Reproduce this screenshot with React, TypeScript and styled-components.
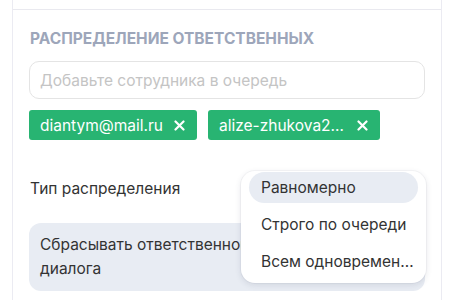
import React from "react";
import styled, { createGlobalStyle } from "styled-components";

const Global = createGlobalStyle`
  html, body { margin: 0; padding: 0; background: #ffffff; }
  body { font-family: Inter, "Noto Sans", sans-serif; color: #333; }
  * { box-sizing: border-box; }
`;

const Panel = styled.div`
  margin-left: 12px;
  width: 430px;
  border-left: 1px solid #ebebf2;
  border-right: 1px solid #ebebf2;
  min-height: 300px;
`;

const PrevSection = styled.div`
  height: 9px;
`;

const Section = styled.section`
  border-top: 1px solid #e9e9ef;
  padding: 18px 16px 0 16px;
  display: flex;
  flex-direction: column;
`;

const Title = styled.h3`
  margin: 0 0 0 1px;
  font-size: 15.5px;
  line-height: 22px;
  font-weight: 700;
  color: #9da6ba;
  text-transform: uppercase;
  letter-spacing: 0;
`;

const Input = styled.input`
  margin-top: 11px;
  height: 38px;
  width: 396px;
  border: 1px solid #e4e4e4;
  border-radius: 10px;
  padding: 0 10px;
  font-family: inherit;
  font-size: 15.5px;
  color: #333;
  outline: none;
  &::placeholder { color: #c4c4c4; }
`;

const Chips = styled.div`
  margin-top: 11px;
  display: flex;
  gap: 11px;
`;

const Chip = styled.div`
  height: 30px;
  display: flex;
  align-items: center;
  gap: 11px;
  padding: 0 12px 0 11px;
  background: #28b472;
  border-radius: 3px;
  color: #fff;
  font-size: 15.5px;
`;

const ChipText = styled.span`
  max-width: 127px;
  white-space: nowrap;
  overflow: hidden;
  text-overflow: ellipsis;
`;

const Close = styled.svg`
  width: 11px;
  height: 11px;
  flex: none;
`;

const Row = styled.div`
  margin-top: 33px;
  height: 30px;
  display: flex;
  align-items: center;
  justify-content: space-between;
  position: relative;
`;

const Label = styled.span`
  font-size: 15.5px;
  margin-left: 1px;
  color: #333;
`;

const SelectWrap = styled.div`
  position: relative;
  width: 185px;
  height: 30px;
  margin-right: -1px;
`;

const Menu = styled.ul`
  position: absolute;
  left: 0;
  top: -2px;
  z-index: 2;
  width: 185px;
  margin: 0;
  padding: 1px 8px 6px;
  list-style: none;
  background: #fff;
  border-radius: 14px;
  box-shadow: 0 2px 6px rgba(40, 50, 80, 0.12), 0 0 0 1px rgba(40, 50, 80, 0.04);
  display: flex;
  flex-direction: column;
  gap: 6px;
`;

const Item = styled.li<{ $active?: boolean }>`
  height: 31px;
  display: flex;
  align-items: center;
  padding: 0 3px 0 12px;
  border-radius: 16px;
  background: ${(p) => (p.$active ? "#e8ecf3" : "transparent")};
  font-size: 15.5px;
  color: #333;
  white-space: nowrap;
  overflow: hidden;
  span { overflow: hidden; text-overflow: ellipsis; }
`;

const Toggle = styled.div`
  margin-top: 20px;
  width: 396px;
  height: 68px;
  background: #e8ecf3;
  border-radius: 12px;
  padding: 10px 11px;
  font-size: 15.5px;
  line-height: 24px;
  color: #333;
`;

const X = () => (
  <Close viewBox="0 0 11 11">
    <path d="M1.5 1.5 L9.5 9.5 M9.5 1.5 L1.5 9.5" stroke="#fff" strokeWidth="2.2" strokeLinecap="round" />
  </Close>
);

export default function App() {
  return (
    <>
      <Global />
      <Panel>
        <PrevSection />
        <Section>
          <Title>Распределение ответственных</Title>
          <Input placeholder="Добавьте сотрудника в очередь" />
          <Chips>
            <Chip>
              <ChipText>diantym@mail.ru</ChipText>
              <X />
            </Chip>
            <Chip>
              <ChipText>alize-zhukova2000@mail.ru</ChipText>
              <X />
            </Chip>
          </Chips>
          <Row>
            <Label>Тип распределения</Label>
            <SelectWrap>
              <Menu>
                <Item $active><span>Равномерно</span></Item>
                <Item><span>Строго по очереди</span></Item>
                <Item><span>Всем одновременно</span></Item>
              </Menu>
            </SelectWrap>
          </Row>
          <Toggle>Сбрасывать ответственного при закрытии диалога</Toggle>
        </Section>
      </Panel>
    </>
  );
}
